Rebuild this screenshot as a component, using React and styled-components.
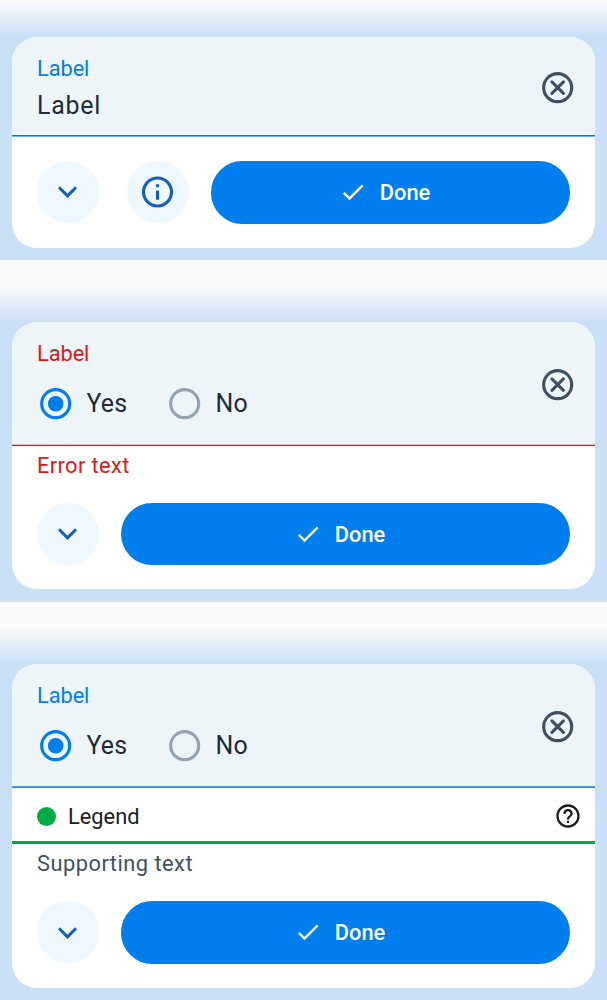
import React from "react";
import styled, { createGlobalStyle } from "styled-components";

const Global = createGlobalStyle`
  * { box-sizing: border-box; }
  body { margin: 0; background: #fafafa; font-family: Roboto, "Liberation Sans", sans-serif; }
  button { font: inherit; border: 0; padding: 0; margin: 0; cursor: pointer; }
`;

const Page = styled.main`
  width: 607px;
  height: 1000px;
  overflow: hidden;
  display: flex;
  flex-direction: column;
  gap: 25px;
  background: #fafafa;
`;

const Sheet = styled.section`
  flex: none;
  padding: 37px 12.45px 12.3px;
  background: linear-gradient(#fafafa 0, #c9e0f7 37px, #c9e0f7 100%);
`;

const Card = styled.div`
  height: ${(p) => p.$height}px;
  border-radius: 25px;
  background: #fff;
  overflow: hidden;
  display: flex;
  flex-direction: column;
`;

const Field = styled.div`
  flex: none;
  height: ${(p) => p.$height}px;
  padding: 0 18.5px 0 24.6px;
  display: flex;
  align-items: center;
  justify-content: space-between;
  background: #edf5f9;
`;

const FieldBody = styled.div`
  align-self: stretch;
  padding-top: 18px;
  display: flex;
  flex-direction: column;
`;

const FieldLabel = styled.div`
  font-size: 21.8px;
  line-height: 28px;
  letter-spacing: -0.08px;
  color: ${(p) => p.$color};
`;

const FieldValue = styled.div`
  margin-top: 5px;
  font-size: 24.9px;
  line-height: 36px;
  letter-spacing: 0.75px;
  color: #1f2b38;
`;

const Rule = styled.div`
  flex: none;
  height: ${(p) => p.$tones.length}px;
  background: linear-gradient(${(p) =>
    p.$tones.map((c, i) => `${c} ${i}px ${i + 1}px`).join(", ")});
`;

const Options = styled.div`
  display: flex;
  gap: 38.9px;
  margin-top: 16.7px;
`;

const Option = styled.div`
  display: flex;
  align-items: center;
  gap: 12px;
  height: 38px;
  font-size: 24.9px;
  letter-spacing: 0.2px;
  color: #1f2b38;
`;

const IconButton = styled.button`
  display: flex;
  margin-top: ${(p) => p.$drop}px;
  background: none;
  color: #3d5163;
`;

const Hint = styled.div`
  flex: none;
  height: 40px;
  padding: ${(p) => p.$top}px 24.6px 0;
  font-size: 21.8px;
  line-height: 38px;
  letter-spacing: ${(p) => p.$spacing}px;
  color: ${(p) => p.$color};
`;

const Legend = styled.div`
  flex: none;
  height: 53px;
  padding: 4px 13px 0 24.6px;
  display: flex;
  align-items: center;
  color: #1b1b1f;
  font-size: 21.8px;
  letter-spacing: 0;
`;

const Dot = styled.span`
  width: 19px;
  height: 19px;
  margin-right: 12px;
  border-radius: 50%;
  background: #00ab41;
`;

const LegendText = styled.span`
  flex: 1;
`;

const Actions = styled.div`
  margin-top: auto;
  padding: 0 24.5px 24.2px 24.6px;
  display: flex;
`;

const RoundButton = styled.button`
  flex: none;
  width: 62px;
  height: 62.2px;
  margin-right: ${(p) => p.$gap}px;
  border-radius: 50%;
  display: flex;
  align-items: center;
  justify-content: center;
  background: #f0f8ff;
  color: #1260be;
`;

const DoneButton = styled.button`
  flex: 1;
  height: 62.5px;
  border-radius: 31.2px;
  display: flex;
  align-items: center;
  justify-content: center;
  gap: 12.5px;
  padding-right: 11.6px;
  background: #007eed;
  color: #fff;
`;

const DoneText = styled.span`
  font-size: 21.8px;
  font-weight: 500;
  letter-spacing: 0;
`;

const Svg = ({ size = 37.35, children }) => (
  <svg width={size} height={size} viewBox="0 0 24 24" fill="none" stroke="currentColor" style={{ display: "block" }}>
    {children}
  </svg>
);

const Chevron = () => (
  <Svg>
    <path d="M7 9.8 11.9 14.7l4.9-4.9" strokeWidth="2" strokeLinecap="round" />
  </Svg>
);

const Info = () => (
  <Svg>
    <circle cx="11.9" cy="12.2" r="9" strokeWidth="2" />
    <path d="M10.9 7.2h2v2h-2zM10.9 11.2h2v6h-2z" fill="currentColor" stroke="none" />
  </Svg>
);

const Cancel = () => (
  <Svg>
    <circle cx="12" cy="12" r="9" strokeWidth="2" />
    <path d="M8.3 8.3l7.4 7.4M15.7 8.3l-7.4 7.4" strokeWidth="2" strokeLinecap="round" />
  </Svg>
);

const Check = () => (
  <Svg size={28}>
    <path
      d="M9 16.17 4.83 12l-1.42 1.41L9 19 21 7l-1.41-1.41z"
      fill="currentColor"
      stroke="none"
    />
  </Svg>
);

const Help = () => (
  <Svg size={28}>
    <path
      d="M11 18h2v-2h-2v2zm1-16C6.48 2 2 6.48 2 12s4.48 10 10 10 10-4.48 10-10S17.52 2 12 2zm0 18c-4.41 0-8-3.59-8-8s3.59-8 8-8 8 3.59 8 8-3.59 8-8 8zm0-14c-2.21 0-4 1.79-4 4h2c0-1.1.9-2 2-2s2 .9 2 2c0 2-3 1.75-3 5h2c0-2.25 3-2.5 3-5 0-2.21-1.79-4-4-4z"
      fill="currentColor"
      stroke="none"
    />
  </Svg>
);

const RadioMark = ({ checked }) => (
  <svg width="37.35" height="37.35" viewBox="0 0 24 24" fill="none">
    <circle cx="12" cy="12" r="9" strokeWidth="2" stroke={checked ? "#007eed" : "#94a3b4"} />
    {checked && <circle cx="12" cy="12" r="5" fill="#007eed" />}
  </svg>
);

const YesNo = () => (
  <Options>
    <Option>
      <RadioMark checked />
      Yes
    </Option>
    <Option>
      <RadioMark />
      No
    </Option>
  </Options>
);

const FieldBox = ({ height, label, color, drop, children }) => (
  <Field $height={height}>
    <FieldBody>
      <FieldLabel $color={color}>{label}</FieldLabel>
      {children}
    </FieldBody>
    <IconButton $drop={drop} aria-label="Clear">
      <Cancel />
    </IconButton>
  </Field>
);

const ActionBar = ({ info }) => (
  <Actions>
    <RoundButton $gap={info ? 28 : 22} aria-label="Expand">
      <Chevron />
    </RoundButton>
    {info && (
      <RoundButton $gap={22} aria-label="Information">
        <Info />
      </RoundButton>
    )}
    <DoneButton>
      <Check />
      <DoneText>Done</DoneText>
    </DoneButton>
  </Actions>
);

export default function App() {
  return (
    <Page>
      <Global />
      <Sheet>
        <Card $height={210.7}>
          <FieldBox height={98} label="Label" color="#007eed" drop={2.4}>
            <FieldValue>Label</FieldValue>
          </FieldBox>
          <Rule $tones={["#0f76d8", "#6db5f5"]} />
          <ActionBar info />
        </Card>
      </Sheet>
      <Sheet>
        <Card $height={267.5}>
          <FieldBox height={122} label="Label" color="#d91a1a" drop={3.2}>
            <YesNo />
          </FieldBox>
          <Rule $tones={["#e5b9bb", "#cf2020", "#fbe4e4"]} />
          <Hint $color="#d91a1a" $spacing={0.38} $top={0}>Error text</Hint>
          <ActionBar />
        </Card>
      </Sheet>
      <Sheet>
        <Card $height={324}>
          <FieldBox height={122} label="Label" color="#007eed" drop={3.2}>
            <YesNo />
          </FieldBox>
          <Rule $tones={["#4ba2ef", "#2489e6"]} />
          <Legend>
            <Dot />
            <LegendText>Legend</LegendText>
            <Help />
          </Legend>
          <Rule $tones={["#00ab41", "#00ab41", "#00ab41"]} />
          <Hint $color="#3d5163" $spacing={0.5} $top={1}>Supporting text</Hint>
          <ActionBar />
        </Card>
      </Sheet>
    </Page>
  );
}
